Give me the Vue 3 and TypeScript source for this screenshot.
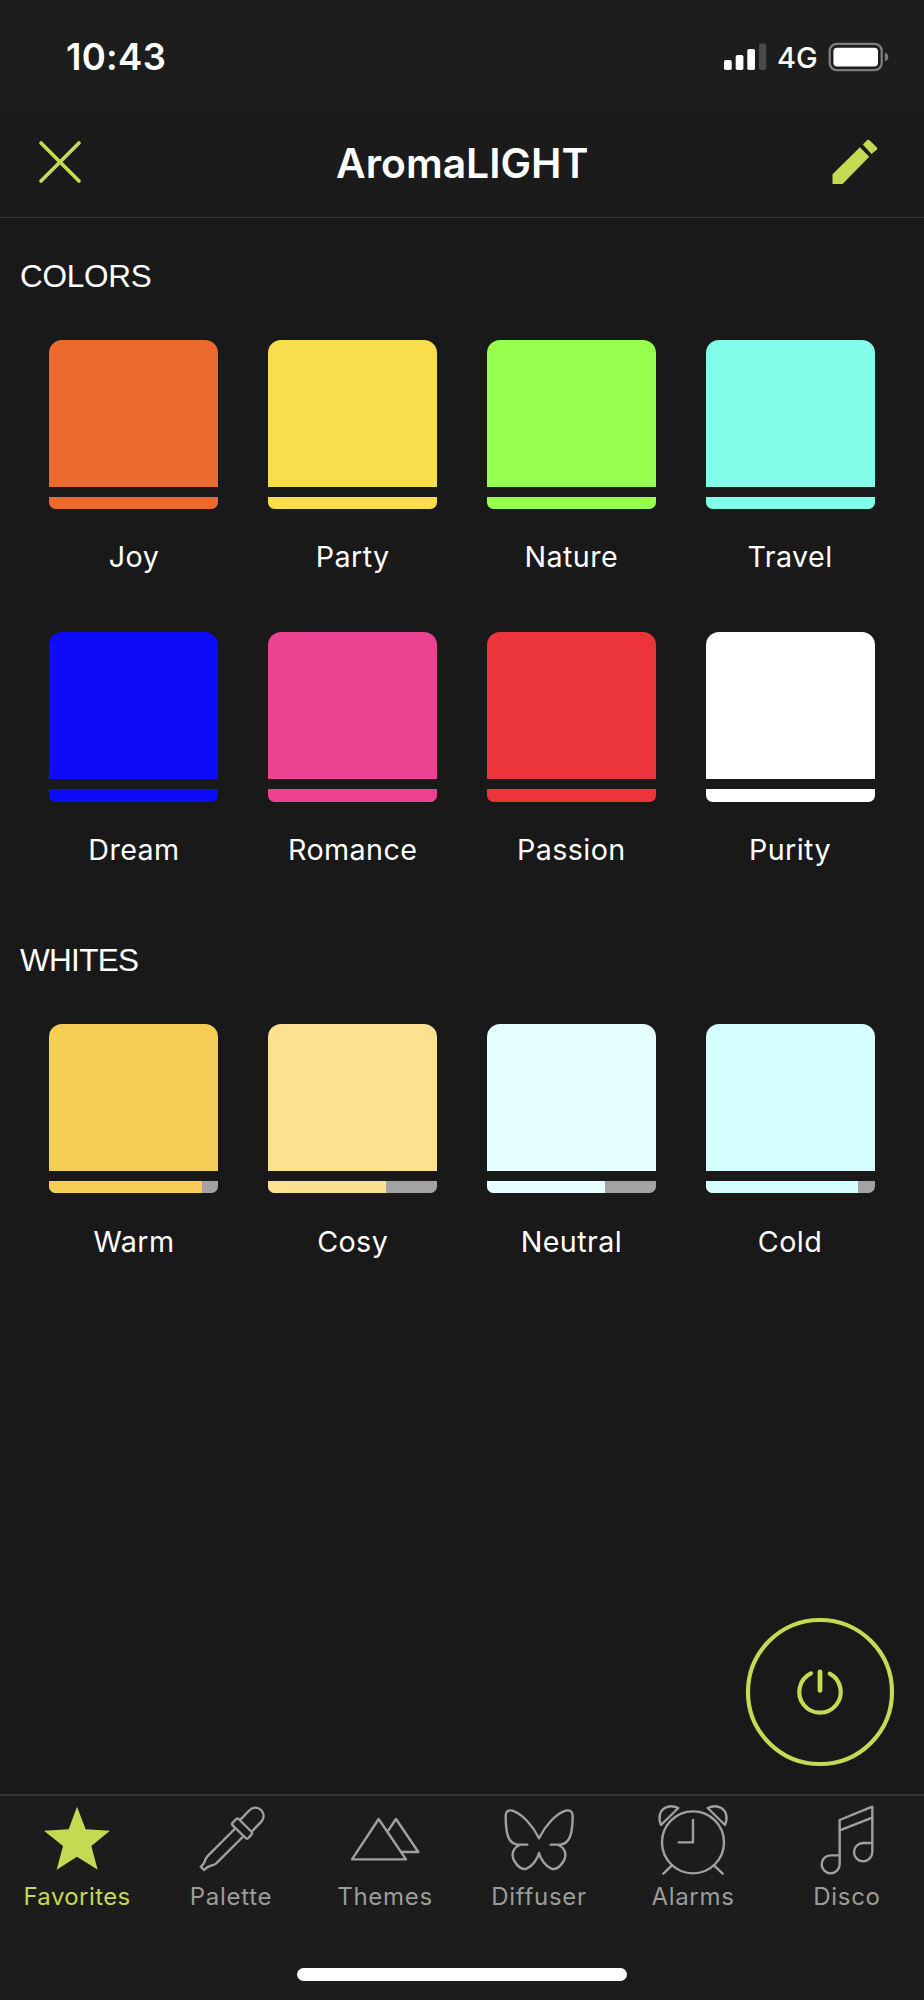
<script setup lang="ts">
interface Swatch {
  name: string
  color: string
  level: number
}

interface Section {
  title: string
  key: string
  items: Swatch[]
}

interface Tab {
  name: string
  viewBox: string
  paths: string[]
  active?: boolean
}

const sections: Section[] = [
  {
    title: 'COLORS',
    key: 'colors',
    items: [
      { name: 'Joy', color: '#ec6a2d', level: 100 },
      { name: 'Party', color: '#f9dd4b', level: 100 },
      { name: 'Nature', color: '#97ff4e', level: 100 },
      { name: 'Travel', color: '#83fce9', level: 100 },
      { name: 'Dream', color: '#0e0bf8', level: 100 },
      { name: 'Romance', color: '#eb4292', level: 100 },
      { name: 'Passion', color: '#ec343d', level: 100 },
      { name: 'Purity', color: '#ffffff', level: 100 },
    ],
  },
  {
    title: 'WHITES',
    key: 'whites',
    items: [
      { name: 'Warm', color: '#f7ce55', level: 90 },
      { name: 'Cosy', color: '#fce190', level: 70 },
      { name: 'Neutral', color: '#e5ffff', level: 70 },
      { name: 'Cold', color: '#d5fefe', level: 90 },
    ],
  },
]

const LEFT_BOX = '123 60 216 228'
const RIGHT_BOX = '585 60 216 228'

const tabs: Tab[] = [
  {
    name: 'Favorites',
    viewBox: LEFT_BOX,
    active: true,
    paths: ['M231 80L257 148L330 152L274 198L293 269L231 230L170 269L189 198L132 152L206 148Z'],
  },
  {
    name: 'Palette',
    viewBox: RIGHT_BOX,
    paths: [
      'M704 147L622 229Q617 234 614 245Q611 254 602 260L612 270Q622 260 630 258Q642 256 648 251L728 171',
      'M716 117Q712 114 708 118L698 128Q694 132 698 136L737 174Q741 178 745 174L755 163Q758 159 755 156Z',
      'M722 118L746 93C758 80 773 80 783 90C794 101 793 115 782 127L758 152',
    ],
  },
  {
    name: 'Themes',
    viewBox: LEFT_BOX,
    paths: ['M212 117L294 238H132Z', 'M239 154L264 117L331 216H280'],
  },
  {
    name: 'Diffuser',
    viewBox: RIGHT_BOX,
    paths: [
      'M658 194H628C600 190 593 160 593 106Q594 88 613 92C642 101 674 136 693 175C712 136 744 101 773 92Q793 88 794 106C794 160 786 190 758 194H728',
      'M636 195C615 203 608 224 619 243C632 264 645 270 656 266C671 260 689 238 693 219C697 238 715 260 730 266C741 270 754 264 767 243C778 224 771 203 750 195',
    ],
  },
  {
    name: 'Alarms',
    viewBox: LEFT_BOX,
    paths: [
      'M324 187A93 93 0 1 1 138 187A93 93 0 1 1 324 187Z',
      'M231 120V187H188',
      'M168 256L142 281M294 256L320 281',
      'M135 135C126 113 131 93 146 84C160 76 175 78 187 84Z',
      'M327 135C336 113 331 93 316 84C302 76 287 78 275 84Z',
    ],
  },
  {
    name: 'Disco',
    viewBox: RIGHT_BOX,
    paths: [
      'M671 226H644A27 27 0 1 0 671 253V120L769 80V217A27.500 27.500 0 1 1 741 189H769',
      'M671 151L769 113',
    ],
  },
]
</script>

<template>
  <div class="screen">
    <div class="status">
      <span class="time">10:43</span>
      <div class="indicators">
        <svg class="signal" viewBox="0 0 43 28">
          <rect x="0" y="17" width="7.700" height="10" rx="1.800" />
          <rect x="11.700" y="12" width="7.700" height="15" rx="1.800" />
          <rect x="23.300" y="6" width="7.700" height="21" rx="1.800" />
          <rect class="dim" x="35" y="0.500" width="7.300" height="26.500" rx="1.800" />
        </svg>
        <span class="network">4G</span>
        <svg class="battery" viewBox="0 0 61 30">
          <rect class="shell" x="1.700" y="1.800" width="52" height="26.400" rx="7" />
          <rect x="5.400" y="5.800" width="44.600" height="18.600" rx="3.600" />
          <path class="nub" d="M56.900 10.500C61.400 12 61.400 18 56.900 19.500Z" />
        </svg>
      </div>
    </div>

    <header class="header">
      <svg class="close" viewBox="0 0 44 44">
        <path d="M3 3L41 41M41 3L3 41" />
      </svg>
      <h1 class="title">AromaLIGHT</h1>
      <svg class="edit" viewBox="0 0 46 46">
        <path d="M27.900 8.300L37.200 17.700L10.500 45H0.500V35.300Z" />
        <path d="M30.800 5.500L34.700 1.500Q36 0 37.500 1.300L44.700 8.200Q46 9.500 44.700 10.800L39.500 15Z" />
      </svg>
    </header>

    <main class="content">
      <section v-for="s in sections" :key="s.key" :class="['section', s.key]">
        <h2 class="heading">{{ s.title }}</h2>
        <div class="grid">
          <div v-for="c in s.items" :key="c.name" class="cell">
            <div class="tile" :style="{ background: c.color }"></div>
            <div class="level">
              <div class="fill" :style="{ background: c.color, width: c.level + '%' }"></div>
            </div>
            <span class="label">{{ c.name }}</span>
          </div>
        </div>
      </section>
      <button class="power" aria-label="Power">
        <svg viewBox="-76 -76 152 152">
          <circle r="72" />
          <path d="M-9.100 -18.600A20.700 20.700 0 1 0 9.700 -18.300" />
          <path class="stem" d="M0 -20.200V-1.600" />
        </svg>
      </button>
    </main>

    <nav class="tabs">
      <div v-for="t in tabs" :key="t.name" :class="['tab', { active: t.active }]">
        <svg class="icon" :viewBox="t.viewBox">
          <path v-for="d in t.paths" :key="d" :d="d" />
        </svg>
        <span class="tab-label">{{ t.name }}</span>
      </div>
    </nav>
    <div class="home"><div class="home-bar"></div></div>
  </div>
</template>

<style>
body {
  margin: 0;
  background: #191919;
}
</style>

<style scoped>
.screen {
  width: 924px;
  height: 2000px;
  display: flex;
  flex-direction: column;
  overflow: hidden;
  background: #191919;
  color: #fff;
  font-family: Inter, "Liberation Sans", sans-serif;
}
.status {
  height: 110px;
  flex: none;
  box-sizing: border-box;
  padding: 32px 35px 0 66px;
  display: flex;
  justify-content: space-between;
  background: #1d1d1d;
}
.time {
  font-size: 36.5px;
  font-weight: 600;
  line-height: 50px;
  letter-spacing: 0.3px;
}
.indicators {
  display: flex;
  height: 50px;
}
.signal {
  width: 43px;
  height: 28px;
  margin: 11px 10px 0 0;
  fill: #fff;
}
.signal .dim {
  fill: #4b4b4b;
}
.network {
  width: 51px;
  font-size: 29px;
  font-weight: 450;
  line-height: 52px;
}
.battery {
  width: 61px;
  height: 30px;
  margin-top: 10px;
  fill: #fff;
}
.battery .shell {
  fill: none;
  stroke: #7d7d7d;
  stroke-width: 2.3;
}
.battery .nub {
  fill: #7d7d7d;
}
.header {
  height: 108px;
  flex: none;
  box-sizing: border-box;
  padding: 0 46px 3px 38.500px;
  display: grid;
  grid-template-columns: 46px 1fr 46px;
  align-items: center;
  background: #1b1b1b;
  border-bottom: 1.500px solid #363636;
}
.close {
  width: 44px;
  height: 44px;
  margin-left: -0.5px;
  fill: none;
  stroke: #c5d952;
  stroke-width: 3.7;
  stroke-linecap: round;
}
.title {
  margin: 0;
  padding: 1.500px 0 0 8px;
  text-align: center;
  font-size: 40.8px;
  font-weight: 600;
  line-height: 50px;
}
.edit {
  width: 46px;
  height: 46px;
  fill: #c5d952;
}
.content {
  position: relative;
  flex: 1;
}
.heading {
  margin: 0;
  padding-left: 20px;
  font-family: "Liberation Sans", sans-serif;
  font-size: 31.5px;
  font-weight: 400;
  line-height: 40px;
  letter-spacing: -0.25px;
}
.section.whites .heading {
  letter-spacing: -0.7px;
}
.section.colors {
  padding-top: 38px;
}
.section.whites {
  padding-top: 72.4px;
}
.grid {
  display: grid;
  grid-template-columns: repeat(4, 1fr);
  row-gap: 57px;
  padding: 44px 24.67px 0;
}
.cell {
  display: flex;
  flex-direction: column;
  align-items: center;
}
.tile {
  width: 169px;
  height: 146.7px;
  border-radius: 13px 13px 0 0;
}
.level {
  width: 169px;
  height: 12.4px;
  margin-top: 10px;
  border-radius: 0 0 6.500px 6.500px;
  overflow: hidden;
  background: #a3a3a3;
}
.fill {
  height: 100%;
}
.label {
  margin-top: 30.4px;
  font-size: 28.7px;
  font-weight: 380;
  line-height: 36px;
  letter-spacing: 0.4px;
}
.power {
  position: absolute;
  right: 28px;
  bottom: 26px;
  width: 152px;
  height: 152px;
  padding: 0;
  border: 0;
  background: none;
}
.power svg {
  display: block;
  fill: none;
  stroke: #c5d952;
  stroke-width: 4.2;
  stroke-linecap: round;
}
.power .stem {
  stroke-width: 4.8;
}
.tabs {
  height: 152px;
  flex: none;
  display: grid;
  grid-template-columns: repeat(6, 1fr);
  background: #1c1c1c;
  border-top: 2px solid #353535;
}
.tab {
  display: flex;
  flex-direction: column;
  align-items: center;
  color: #9b9b9b;
}
.icon {
  width: 72px;
  height: 76px;
  margin-top: 4px;
  fill: none;
  stroke: #a0a0a0;
  stroke-width: 7.2;
  stroke-linecap: round;
  stroke-linejoin: round;
}
.tab-label {
  margin-top: 6px;
  font-size: 24px;
  line-height: 30px;
  letter-spacing: 0.7px;
}
.tab.active {
  color: #c5d952;
}
.tab.active .icon {
  fill: #c5d952;
  stroke: none;
}
.tab.active .tab-label {
  letter-spacing: 0.4px;
}
.home {
  flex: none;
  height: 52px;
  display: flex;
  justify-content: center;
  align-items: flex-start;
  background: #1c1c1c;
}
.home-bar {
  width: 330.4px;
  height: 13px;
  margin-top: 19.500px;
  border-radius: 7px;
  background: #fff;
}
</style>
